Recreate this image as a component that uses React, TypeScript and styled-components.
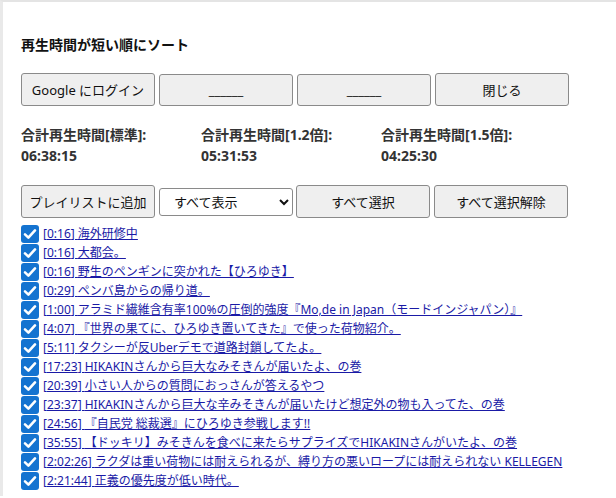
import styled, { createGlobalStyle } from 'styled-components';

const videos = [
    { time: '0:16', title: '海外研修中' },
    { time: '0:16', title: '大都会。' },
    { time: '0:16', title: '野生のペンギンに突かれた【ひろゆき】' },
    { time: '0:29', title: 'ペンバ島からの帰り道。' },
    { time: '1:00', title: 'アラミド繊維含有率100%の圧倒的強度『Mo,de in Japan（モードインジャパン）』' },
    { time: '4:07', title: '『世界の果てに、ひろゆき置いてきた』で使った荷物紹介。' },
    { time: '5:11', title: 'タクシーが反Uberデモで道路封鎖してたよ。' },
    { time: '17:23', title: 'HIKAKINさんから巨大なみそきんが届いたよ、の巻' },
    { time: '20:39', title: '小さい人からの質問におっさんが答えるやつ' },
    { time: '23:37', title: 'HIKAKINさんから巨大な辛みそきんが届いたけど想定外の物も入ってた、の巻' },
    { time: '24:56', title: '『自民党 総裁選』にひろゆき参戦します!!' },
    { time: '35:55', title: '【ドッキリ】みそきんを食べに来たらサプライズでHIKAKINさんがいたよ、の巻' },
    { time: '2:02:26', title: 'ラクダは重い荷物には耐えられるが、縛り方の悪いロープには耐えられない KELLEGEN' },
    { time: '2:21:44', title: '正義の優先度が低い時代。' },
];

const totals = [
    { label: '合計再生時間[標準]:', value: '06:38:15' },
    { label: '合計再生時間[1.2倍]:', value: '05:31:53' },
    { label: '合計再生時間[1.5倍]:', value: '04:25:30' },
];

export default function App() {
    return (
        <>
            <GlobalStyle />
            <Panel>
                <Title>再生時間が短い順にソート</Title>

                <Toolbar>
                    <Button>Google にログイン</Button>
                    <Button>______</Button>
                    <Button>______</Button>
                    <Button>閉じる</Button>
                </Toolbar>

                <Totals>
                    {totals.map((t) => (
                        <Total key={t.label}>
                            <div>{t.label}</div>
                            <div>{t.value}</div>
                        </Total>
                    ))}
                </Totals>

                <Toolbar>
                    <Button>プレイリストに追加</Button>
                    <Select defaultValue="all">
                        <option value="all">すべて表示</option>
                        <option value="checked">選択済みのみ</option>
                    </Select>
                    <Button>すべて選択</Button>
                    <Button>すべて選択解除</Button>
                </Toolbar>

                <List>
                    {videos.map((v, i) => (
                        <Item key={i}>
                            <Check>
                                <svg width="14" height="14" viewBox="0 0 14 14">
                                    <path
                                        d="M2 7.4 L5.4 10.6 L12 3.4"
                                        fill="none"
                                        stroke="#fff"
                                        strokeWidth="2.6"
                                        strokeLinecap="round"
                                        strokeLinejoin="round"
                                    />
                                </svg>
                            </Check>
                            <VideoLink href="#">
                                [{v.time}] {v.title}
                            </VideoLink>
                        </Item>
                    ))}
                </List>
            </Panel>
        </>
    );
}

// Styled Components
const GlobalStyle = createGlobalStyle`
    html, body {
        margin: 0;
        background: #ffffff;
    }
    body {
        font-family: "Noto Sans", "Noto Sans CJK JP", sans-serif;
        color: #222;
    }
`;

const Panel = styled.div`
    min-height: 496px;
    border-top: 2px solid #e4e4e4;
    border-left: 3px solid #e9e9e9;
    padding: 34px 0 0 18px;
    box-sizing: border-box;
`;

const Title = styled.h2`
    margin: 0;
    font-size: 14px;
    font-weight: 700;
    line-height: 18px;
    color: #111;
`;

const Toolbar = styled.div`
    display: flex;
    align-items: baseline;
    gap: 4px;
    margin-top: 19px;

    & + & {
        margin-top: 17px;
    }
`;

const Button = styled.button`
    width: 134px;
    padding: 6px 4px;
    font-family: inherit;
    font-size: 13px;
    color: #111;
    background-color: #efefef;
    border: 1px solid #8a8a8a;
    border-radius: 3px;
    cursor: pointer;

    &:hover {
        background-color: #e5e5e5;
    }
`;

const Select = styled.select`
    width: 134px;
    height: 28px;
    margin-right: -1px;
    padding: 0 6px 0 10px;
    font-family: inherit;
    font-size: 13px;
    color: #111;
    background-color: #fff;
    border: 1px solid #8a8a8a;
    border-radius: 3px;
`;

const Totals = styled.div`
    display: grid;
    grid-template-columns: repeat(3, 180px);
    margin-top: 18px;
`;

const Total = styled.div`
    font-size: 14px;
    font-weight: 700;
    line-height: 21px;
    color: #333;
`;

const List = styled.div`
    margin-top: 6px;
`;

const Item = styled.div`
    display: flex;
    align-items: center;
    height: 19px;
    white-space: nowrap;
`;

const Check = styled.span`
    display: flex;
    align-items: center;
    justify-content: center;
    flex: none;
    width: 18px;
    height: 18px;
    margin-right: 4px;
    background-color: #1473d0;
    border-radius: 3px;
`;

const VideoLink = styled.a`
    font-size: 12px;
    line-height: 19px;
    color: #1a1aa6;
`;
